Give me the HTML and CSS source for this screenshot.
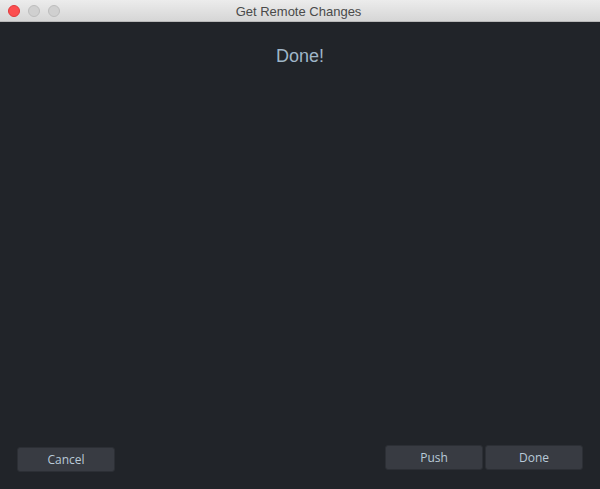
FILE: index.html
```html
<!DOCTYPE html>
<html>
<head>
<meta charset="utf-8">
<link rel="stylesheet" href="styles.css">
</head>
<body>
<div class="window">
  <div class="titlebar">
    <div class="lights">
      <span class="light red"></span>
      <span class="light grey"></span>
      <span class="light grey"></span>
    </div>
    <div class="title">Get Remote Changes</div>
  </div>
  <div class="content">
    <div class="status">Done!</div>
    <div class="footer">
      <button class="btn cancel">Cancel</button>
      <div class="right">
        <button class="btn">Push</button>
        <button class="btn">Done</button>
      </div>
    </div>
  </div>
</div>
</body>
</html>
```

FILE: styles.css
```css
html, body {
  margin: 0;
  padding: 0;
  width: 600px;
  height: 489px;
  overflow: hidden;
  background: #212429;
}
.window {
  width: 600px;
  height: 489px;
  display: flex;
  flex-direction: column;
}
.titlebar {
  height: 22px;
  flex: none;
  position: relative;
  background: linear-gradient(#ececec, #d6d6d6);
  border-bottom: 1px solid #b8b8b8;
  box-sizing: border-box;
  display: flex;
  align-items: center;
  justify-content: center;
}
.lights {
  position: absolute;
  left: 8px;
  top: 5px;
  display: flex;
  gap: 8px;
}
.light {
  width: 12px;
  height: 12px;
  border-radius: 50%;
  box-sizing: border-box;
}
.light.red {
  background: #fc4e4f;
  border: 1px solid #e0393b;
}
.light.grey {
  background: #d0d0d0;
  border: 1px solid #bdbdbd;
}
.title {
  font-family: "Liberation Sans", Arial, sans-serif;
  font-size: 13px;
  color: #4a4a4a;
  margin-left: -3px;
  padding-top: 1px;
}
.content {
  flex: 1;
  display: flex;
  flex-direction: column;
  justify-content: space-between;
}
.status {
  text-align: center;
  font-family: "Liberation Sans", Arial, sans-serif;
  font-size: 18px;
  color: #9fb6c8;
  margin-top: 24px;
}
.footer {
  display: flex;
  justify-content: space-between;
  align-items: flex-start;
  padding: 0 17px 17px 17px;
}
.right {
  display: flex;
  gap: 2px;
  margin-top: -2px;
}
.btn {
  width: 98px;
  height: 25px;
  background: #383b42;
  border: 1px solid #2c2f35;
  border-radius: 3px;
  color: #b9cad8;
  font-family: "Open Sans", "Noto Sans", sans-serif;
  font-size: 12px;
  padding: 0;
  box-sizing: border-box;
}
```
